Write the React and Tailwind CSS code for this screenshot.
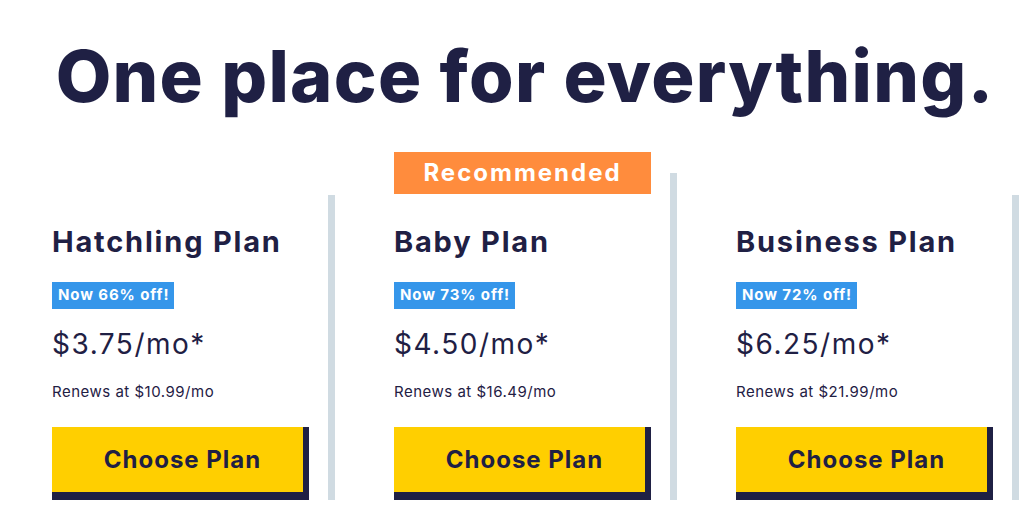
import React from 'react';

const plans = [
  { name: 'Hatchling Plan', off: 'Now 66% off!', price: '$3.75/mo*', renews: 'Renews at $10.99/mo' },
  { name: 'Baby Plan', off: 'Now 73% off!', price: '$4.50/mo*', renews: 'Renews at $16.49/mo', recommended: true },
  { name: 'Business Plan', off: 'Now 72% off!', price: '$6.25/mo*', renews: 'Renews at $21.99/mo' },
];

function PlanCard({ plan }) {
  return (
    <div className="flex w-[342px] shrink-0">
      <div className="flex-1 pl-[59px] pr-[19px]">
        {plan.recommended ? (
          <div className="h-[42px] w-[257px] bg-[#ff8c3d] flex items-center justify-center text-white text-[24px] font-bold tracking-[2px]">
            Recommended
          </div>
        ) : (
          <div className="h-[42px]"></div>
        )}
        <h2 className="mt-[31px] text-[29px] leading-[34px] font-bold tracking-[1.8px] text-[#1f2044]">{plan.name}</h2>
        <div className="mt-[23px] inline-flex h-[27px] items-center bg-[#3596ea] pl-[6px] pr-[5px] text-white text-[15px] font-bold tracking-[0.9px]">
          {plan.off}
        </div>
        <p className="mt-[18px] text-[28px] leading-[34px] tracking-[1.5px] text-[#1f2044]">{plan.price}</p>
        <p className="mt-[21px] text-[15px] leading-[20px] tracking-[0.5px] text-[#1f2044]">{plan.renews}</p>
        <button className="mt-[25px] w-[257px] h-[73px] bg-[#ffcf00] border-r-[6px] border-b-[8px] border-[#1f2044] pl-[10px] text-[24px] font-bold tracking-[1px] text-[#1f2044]">
          Choose Plan
        </button>
      </div>
      <div className={`w-[7px] bg-[#d0dbe2] ${plan.recommended ? 'mt-[21px]' : 'mt-[43px]'}`}></div>
    </div>
  );
}

export default function App() {
  return (
    <div className="w-[1024px] h-[505px] overflow-hidden bg-white font-['Inter',sans-serif]">
      <h1 className="pt-[40px] pl-[26px] text-center text-[72px] leading-none font-extrabold tracking-[1.3px] text-[#1f2044]">
        One place for everything.
      </h1>
      <div className="mt-[40px] ml-[-7px] flex">
        {plans.map((p) => (
          <PlanCard key={p.name} plan={p} />
        ))}
      </div>
    </div>
  );
}
